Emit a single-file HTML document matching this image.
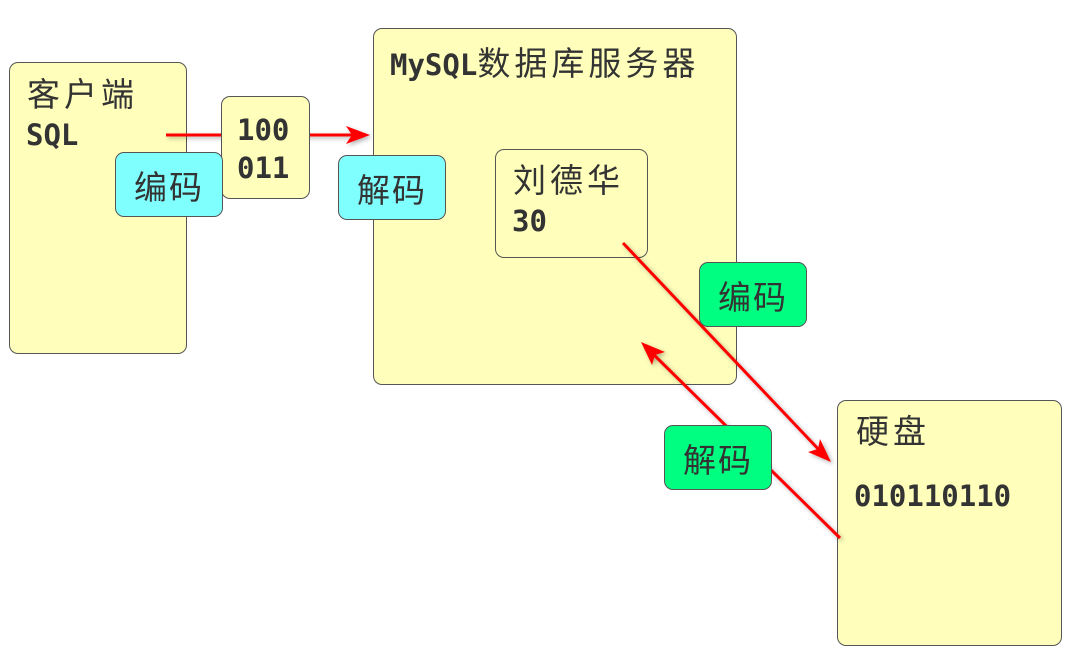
<!DOCTYPE html>
<html><head><meta charset="utf-8"><style>
body{margin:0;width:1072px;height:658px;background:#fff;position:relative;overflow:hidden;font-family:"Liberation Sans","Noto Sans CJK SC",sans-serif;color:#333}
.b{position:absolute;background:#ffffbb;border:1px solid #555;border-radius:9px;box-sizing:border-box}
.t{position:absolute;font-size:33px;letter-spacing:4px;line-height:38px;white-space:nowrap}
.m{font-family:"DejaVu Sans Mono","Liberation Mono","Noto Sans CJK SC",monospace;font-weight:bold;font-size:29px;letter-spacing:0}
.c{background:#80ffff}.g{background:#00ff80}
.lab{display:flex;align-items:center;justify-content:center;font-size:33px;letter-spacing:2px}
svg{position:absolute;left:0;top:0}
</style></head><body>
<div class="b" style="left:9px;top:62px;width:178px;height:292px"></div>
<div class="t" style="left:27px;top:76px">客户端</div>
<div class="t m" style="left:26px;top:116px">SQL</div>
<div class="b" style="left:373px;top:28px;width:364px;height:357px"></div>
<div class="t m" style="left:390px;top:42px">MySQL<span style="font-family:'Noto Sans CJK SC',sans-serif;font-weight:normal;font-size:33px;letter-spacing:4px">数据库服务器</span></div>
<div class="b" style="left:495px;top:149px;width:153px;height:109px"></div>
<div class="t" style="left:513px;top:162px">刘德华</div>
<div class="t m" style="left:512px;top:202px">30</div>
<div class="b" style="left:837px;top:400px;width:225px;height:246px"></div>
<div class="t" style="left:856px;top:413px">硬盘</div>
<div class="t m" style="left:854px;top:477px">010110110</div>
<svg width="1072" height="658"><defs><filter id="s"><feDropShadow dx="2" dy="2" stdDeviation="2" flood-opacity="0.3"/></filter></defs>
<g stroke="red" stroke-width="3" fill="red" filter="url(#s)">
<line x1="166" y1="135" x2="358" y2="135"/><path d="M370 135 L346 126 L352 135 L346 144Z" stroke="none"/>
<line x1="623" y1="243" x2="822" y2="453"/><path d="M831 462 L808 452 L818 449 L820 439Z" stroke="none"/>
<line x1="840" y1="538" x2="650" y2="351"/><path d="M641 342 L665 352 L655 355 L652 365Z" stroke="none"/>
</g></svg>
<div class="b" style="left:221px;top:96px;width:89px;height:103px"></div>
<div class="t m" style="left:237px;top:111px;line-height:38px">100<br>011</div>
<div class="b c lab" style="left:115px;top:152px;width:108px;height:65px">编码</div>
<div class="b c lab" style="left:338px;top:155px;width:108px;height:65px">解码</div>
<div class="b g lab" style="left:699px;top:262px;width:108px;height:65px">编码</div>
<div class="b g lab" style="left:664px;top:425px;width:108px;height:65px">解码</div>
</body></html>
